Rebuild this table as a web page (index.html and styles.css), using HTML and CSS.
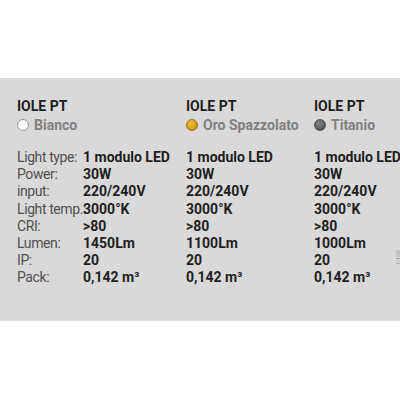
FILE: index.html
```html
<!DOCTYPE html>
<html>
<head>
<meta charset="utf-8">
<link rel="stylesheet" href="styles.css">
</head>
<body>
<div class="band">
  <div class="specs">
    <div class="head span2">
      <div class="title">IOLE PT</div>
      <div class="finish"><span class="dot white"></span>Bianco</div>
    </div>
    <div class="head">
      <div class="title">IOLE PT</div>
      <div class="finish"><span class="dot gold"></span>Oro Spazzolato</div>
    </div>
    <div class="head">
      <div class="title">IOLE PT</div>
      <div class="finish"><span class="dot grey"></span>Titanio</div>
    </div>

    <div class="lbl first">Light type:</div><div class="val first">1 modulo LED</div><div class="val first">1 modulo LED</div><div class="val first">1 modulo LED</div>
    <div class="lbl">Power:</div><div class="val">30W</div><div class="val">30W</div><div class="val">30W</div>
    <div class="lbl">input:</div><div class="val">220/240V</div><div class="val">220/240V</div><div class="val">220/240V</div>
    <div class="lbl">Light temp.:</div><div class="val">3000°K</div><div class="val">3000°K</div><div class="val">3000°K</div>
    <div class="lbl">CRI:</div><div class="val">&gt;80</div><div class="val">&gt;80</div><div class="val">&gt;80</div>
    <div class="lbl">Lumen:</div><div class="val">1450Lm</div><div class="val">1100Lm</div><div class="val">1000Lm</div>
    <div class="lbl">IP:</div><div class="val">20</div><div class="val">20</div><div class="val">20</div>
    <div class="lbl">Pack:</div><div class="val">0,142 m³</div><div class="val">0,142 m³</div><div class="val">0,142 m³</div>
  </div>
  <div class="side">1:100</div>
</div>
</body>
</html>
```

FILE: styles.css
```css
html, body {
  margin: 0;
  padding: 0;
  background: #ffffff;
}
body {
  font-family: Roboto, "Liberation Sans", sans-serif;
  width: 400px;
  height: 400px;
  overflow: hidden;
}
.band {
  position: relative;
  margin-top: 78px;
  height: 243px;
  background: #d9d9d9;
  padding: 19px 0 0 17px;
  box-sizing: border-box;
}
.specs {
  display: grid;
  grid-template-columns: 66px 103px 128px auto;
  font-size: 14px;
  line-height: 17.2px;
  white-space: nowrap;
}
.head {
  line-height: 18.5px;
  margin-bottom: 15px;
}
.span2 {
  grid-column: span 2;
}
.title {
  font-weight: 700;
  color: #1e1e1e;
}
.finish {
  font-weight: 700;
  color: #808080;
  display: flex;
  align-items: center;
}
.dot {
  width: 12px;
  height: 12px;
  border-radius: 50%;
  margin-right: 5px;
  box-sizing: border-box;
  flex: none;
}
.dot.white {
  background: #fbfbfb;
  border: 1px solid #9a9a9a;
}
.dot.gold {
  background: radial-gradient(circle at 40% 35%, #f2c040, #d89a10 60%, #a87408);
  border: 1px solid #9c7a2a;
}
.dot.grey {
  background: radial-gradient(circle at 40% 35%, #8a8a8a, #5c5c5c 60%, #3e3e3e);
  border: 1px solid #555;
}
.lbl {
  color: #505050;
  font-weight: 400;
  letter-spacing: -0.4px;
}
.val {
  color: #1e1e1e;
  font-weight: 700;
}
.side {
  position: absolute;
  right: -5px;
  top: 176px;
  font-size: 6px;
  color: #9a9a9a;
  transform: rotate(-90deg);
  transform-origin: center;
}
```
